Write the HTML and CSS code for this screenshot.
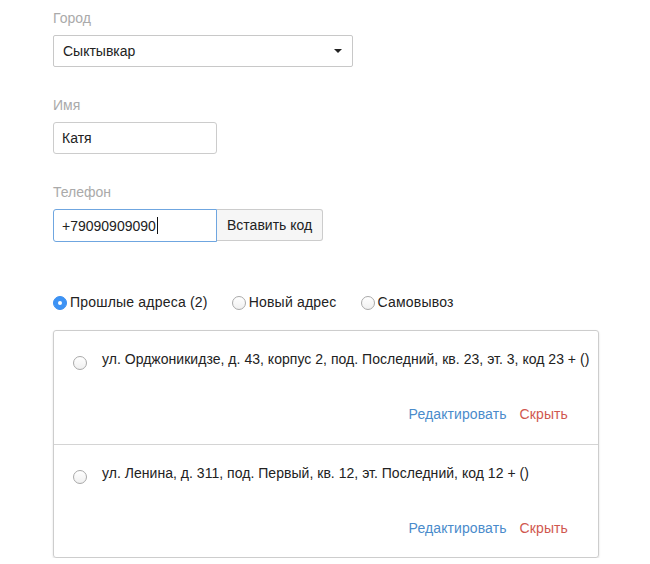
FILE: index.html
```html
<!DOCTYPE html>
<html lang="ru">
<head>
<meta charset="utf-8">
<link rel="stylesheet" href="styles.css">
</head>
<body>
<div class="form">
  <div class="field">
    <div class="label">Город</div>
    <div class="select">
      <span>Сыктывкар</span>
      <span class="caret"></span>
    </div>
  </div>
  <div class="field">
    <div class="label">Имя</div>
    <div class="input short">Катя</div>
  </div>
  <div class="field">
    <div class="label">Телефон</div>
    <div class="group">
      <div class="input short focus">+79090909090<span class="cursor"></span></div>
      <div class="btn">Вставить код</div>
    </div>
  </div>

  <div class="tabs">
    <label class="opt"><span class="radio checked"></span>Прошлые адреса (2)</label>
    <label class="opt"><span class="radio"></span>Новый адрес</label>
    <label class="opt"><span class="radio"></span>Самовывоз</label>
  </div>

  <div class="panel">
    <div class="row">
      <div class="addr"><span class="radio"></span><span class="text">ул. Орджоникидзе, д. 43, корпус 2, под. Последний, кв. 23, эт. 3, код 23 + ()</span></div>
      <div class="actions"><a class="edit">Редактировать</a><a class="hide">Скрыть</a></div>
    </div>
    <div class="row">
      <div class="addr"><span class="radio"></span><span class="text">ул. Ленина, д. 311, под. Первый, кв. 12, эт. Последний, код 12 + ()</span></div>
      <div class="actions"><a class="edit">Редактировать</a><a class="hide">Скрыть</a></div>
    </div>
  </div>
</div>
</body>
</html>
```
FILE: styles.css
```css
html, body {
  margin: 0;
  padding: 0;
  background: #fff;
}
body {
  font-family: "Liberation Sans", Arial, sans-serif;
  font-size: 14px;
  color: #222;
}
.form {
  padding: 10px 0 0 53px;
  width: 546px;
}
.field {
  margin-bottom: 30px;
}
.label {
  color: #aaa;
  line-height: 17px;
  margin-bottom: 8px;
}
.select {
  box-sizing: border-box;
  width: 300px;
  height: 32px;
  border: 1px solid #c8c8c8;
  border-radius: 2px;
  display: flex;
  align-items: center;
  justify-content: space-between;
  padding: 0 8px 0 9px;
  background: #fff;
}
.caret {
  width: 0;
  height: 0;
  border-left: 4px solid transparent;
  border-right: 4px solid transparent;
  border-top: 4px solid #222;
  margin-right: 2px;
}
.input {
  box-sizing: border-box;
  height: 32px;
  border: 1px solid #ccc;
  border-radius: 3px;
  padding: 0 8px;
  display: flex;
  align-items: center;
  background: #fff;
}
.short {
  width: 164px;
}
.group {
  display: flex;
}
.input.focus {
  border-color: #6fa6e0;
  border-radius: 3px 0 0 3px;
  height: 33px;
}
.cursor {
  display: inline-block;
  width: 1px;
  height: 17px;
  background: #111;
  margin-left: 1px;
}
.btn {
  box-sizing: border-box;
  height: 32px;
  border: 1px solid #ccc;
  border-left: none;
  border-radius: 0 3px 3px 0;
  background: #f6f6f6;
  padding: 0 10px;
  display: flex;
  align-items: center;
  color: #222;
}
.tabs {
  display: flex;
  gap: 24px;
  margin-top: 51px;
  line-height: 18px;
  margin-bottom: 19px;
  letter-spacing: 0.2px;
}
.opt {
  display: flex;
  align-items: center;
  gap: 3px;
}
.radio {
  box-sizing: border-box;
  display: inline-block;
  width: 14px;
  height: 14px;
  border-radius: 50%;
  border: 1px solid #a9a9a9;
  background: linear-gradient(#ffffff, #f0f0f0);
  flex: none;
  position: relative;
  top: 1px;
}
.radio.checked {
  border-color: #3a8ef0;
  background: #3d93f5;
}
.radio.checked::after {
  content: "";
  position: absolute;
  left: 4px;
  top: 4px;
  width: 4px;
  height: 4px;
  border-radius: 50%;
  background: #fff;
}
.panel {
  border: 1px solid #cdcdcd;
  border-radius: 3px;
  box-shadow: 0 1px 2px rgba(0, 0, 0, 0.15);
  width: 546px;
  box-sizing: border-box;
}
.row {
  padding: 19px 4px 20px 19px;
  height: 113px;
  box-sizing: border-box;
}
.row + .row {
  border-top: 1px solid #d4d4d4;
}
.addr {
  display: flex;
  align-items: flex-start;
  line-height: 18px;
  white-space: nowrap;
  letter-spacing: 0.03px;
}
.addr .radio {
  margin-top: 6px;
  top: 0;
  margin-right: 15px;
}
.actions {
  display: flex;
  justify-content: flex-end;
  gap: 13px;
  margin-top: 35px;
  margin-right: 26px;
  line-height: 18px;
  letter-spacing: 0.1px;
}
.edit {
  color: #4a8bcb;
}
.hide {
  color: #d0574f;
}
```
